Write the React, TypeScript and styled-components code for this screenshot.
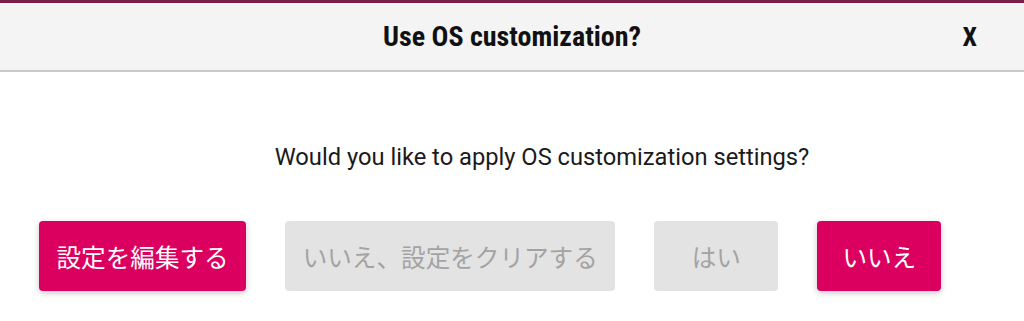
import styled, { createGlobalStyle } from 'styled-components';

const GlobalStyle = createGlobalStyle`
  html, body {
    margin: 0;
    padding: 0;
    background: #ffffff;
  }
  body {
    font-family: Roboto, "Noto Sans CJK JP", sans-serif;
  }
`;

const Dialog = styled.div`
  width: 1024px;
  height: 321px;
  display: flex;
  flex-direction: column;
  border-top: 3px solid #7b2049;
  box-sizing: border-box;
  overflow: hidden;
`;

const Header = styled.header`
  height: 67px;
  display: grid;
  grid-template-columns: 1fr auto 1fr;
  align-items: center;
  background: #f4f4f4;
  border-bottom: 2px solid #c9c9c9;
`;

const Title = styled.h1`
  grid-column: 2;
  margin: 0;
  font-family: "Liberation Sans Narrow", "Roboto Condensed", Roboto, sans-serif;
  font-weight: 700;
  font-size: 28px;
  color: #111;
`;

const CloseButton = styled.button`
  grid-column: 3;
  justify-self: end;
  margin-right: 47px;
  padding: 0;
  border: none;
  background: transparent;
  font-family: "Liberation Sans Narrow", "Roboto Condensed", Roboto, sans-serif;
  font-weight: 700;
  font-size: 26px;
  color: #111;
  cursor: pointer;
`;

const Body = styled.div`
  flex: 1;
  display: flex;
  flex-direction: column;
  padding: 71px 0 0 39px;
`;

const Message = styled.p`
  margin: 0;
  padding-left: 21px;
  text-align: center;
  font-family: Roboto, sans-serif;
  font-size: 23.7px;
  color: #1a1a1a;
`;

const Actions = styled.div`
  display: flex;
  gap: 39px;
  margin-top: 50px;
`;

const ActionButton = styled.button<{ $primary?: boolean }>`
  height: 70px;
  min-width: 124px;
  padding: 0 17.5px;
  border: none;
  border-radius: 4px;
  font-family: Roboto, "Noto Sans CJK JP", sans-serif;
  font-size: 24.6px;
  background: ${({ $primary }) => ($primary ? '#db0060' : '#e3e3e3')};
  color: ${({ $primary }) => ($primary ? '#ffffff' : '#a3a3a3')};
  box-shadow: ${({ $primary }) => ($primary ? '0 2px 6px rgba(0, 0, 0, 0.22)' : 'none')};
  cursor: pointer;
`;

export default function App() {
  return (
    <>
      <GlobalStyle />
      <Dialog>
        <Header>
          <Title>Use OS customization?</Title>
          <CloseButton>X</CloseButton>
        </Header>
        <Body>
          <Message>Would you like to apply OS customization settings?</Message>
          <Actions>
            <ActionButton $primary>設定を編集する</ActionButton>
            <ActionButton>いいえ、設定をクリアする</ActionButton>
            <ActionButton>はい</ActionButton>
            <ActionButton $primary>いいえ</ActionButton>
          </Actions>
        </Body>
      </Dialog>
    </>
  );
}
